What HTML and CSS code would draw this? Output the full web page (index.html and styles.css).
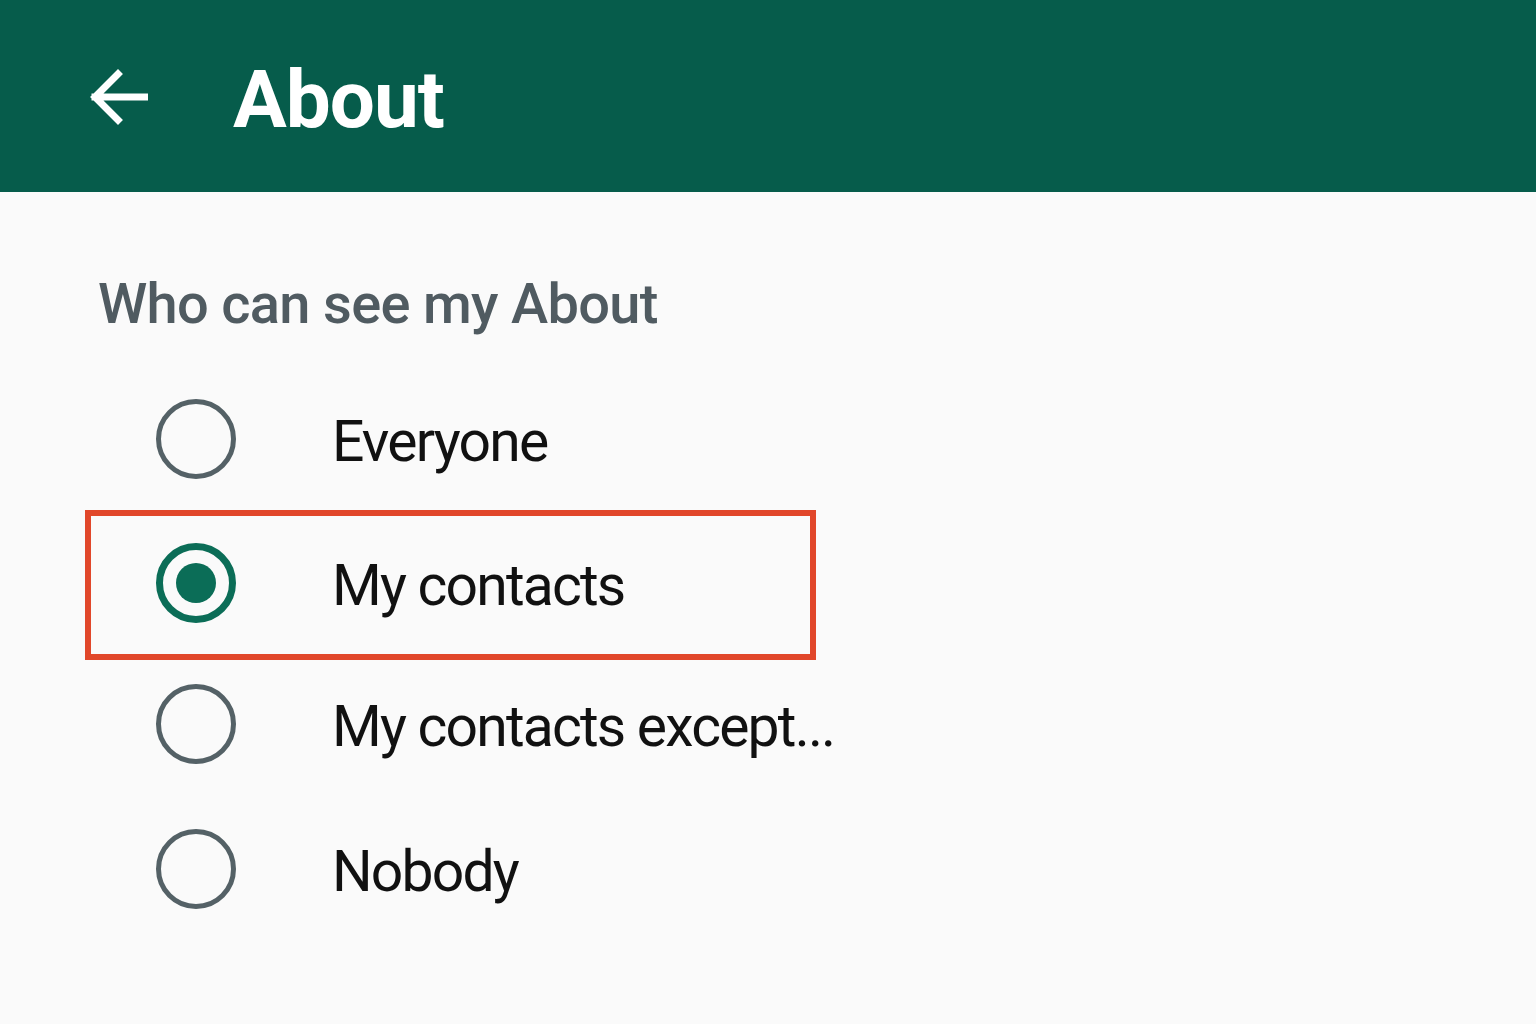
FILE: index.html
```html
<!DOCTYPE html>
<html lang="en">
<head>
<meta charset="utf-8">
<title>About</title>
<link rel="stylesheet" href="styles.css">
</head>
<body>
<header class="appbar">
  <svg class="back" viewBox="0 0 60 60" width="60" height="60" aria-hidden="true">
    <path d="M57 30H7M30 7L7 30l23 23" fill="none" stroke="#fff" stroke-width="7" stroke-linecap="square" stroke-linejoin="miter"/>
  </svg>
  <h1 class="title">About</h1>
</header>
<main class="content">
  <h2 class="section">Who can see my About</h2>
  <ul class="options">
    <li class="option"><span class="radio"></span><span class="label">Everyone</span></li>
    <li class="option selected"><span class="radio on"></span><span class="label">My contacts</span></li>
    <li class="option"><span class="radio"></span><span class="label">My contacts except...</span></li>
    <li class="option"><span class="radio"></span><span class="label">Nobody</span></li>
  </ul>
</main>
</body>
</html>
```
FILE: styles.css
```css
*, *::before, *::after { box-sizing: border-box; }
html, body { margin: 0; padding: 0; }
body {
  width: 1536px;
  height: 1024px;
  background: #fafafa;
  font-family: Roboto, "Liberation Sans", sans-serif;
  overflow: hidden;
}
.appbar {
  height: 192px;
  background: #065c4b;
  display: flex;
  align-items: center;
  padding-left: 88px;
}
.back { display: block; margin-top: 2px; }
.title {
  margin: 8px 0 0 85px;
  color: #fff;
  font-size: 80px;
  font-weight: 700;
  letter-spacing: -1px;
  line-height: 1;
}
.section {
  margin: 0;
  height: 175px;
  padding: 84px 0 0 98px;
  color: #505b61;
  font-size: 56px;
  font-weight: 500;
  letter-spacing: -0.7px;
  line-height: 1;
}
.options { list-style: none; margin: 0; padding: 0; }
.option {
  height: 144px;
  display: flex;
  align-items: center;
  padding-left: 156px;
  position: relative;
}
.option:nth-child(3) { margin-top: -3px; }
.option:nth-child(4) { margin-top: 1px; }
.option.selected::after {
  content: "";
  position: absolute;
  left: 85px;
  width: 731px;
  top: -1px;
  height: 150px;
  border: 6px solid #e1472a;
}
.radio {
  width: 80px;
  height: 80px;
  border-radius: 50%;
  border: 5px solid #546166;
  flex: none;
  position: relative;
}
.radio.on { border: 7px solid #0b6d57; }
.radio.on::before {
  content: "";
  position: absolute;
  left: 50%;
  top: 50%;
  width: 40px;
  height: 40px;
  margin: -20px 0 0 -20px;
  border-radius: 50%;
  background: #0b6d57;
}
.label {
  margin-left: 96px;
  font-size: 57px;
  letter-spacing: -1.8px;
  color: #111;
  line-height: 1;
  margin-top: 4px;
}
```
